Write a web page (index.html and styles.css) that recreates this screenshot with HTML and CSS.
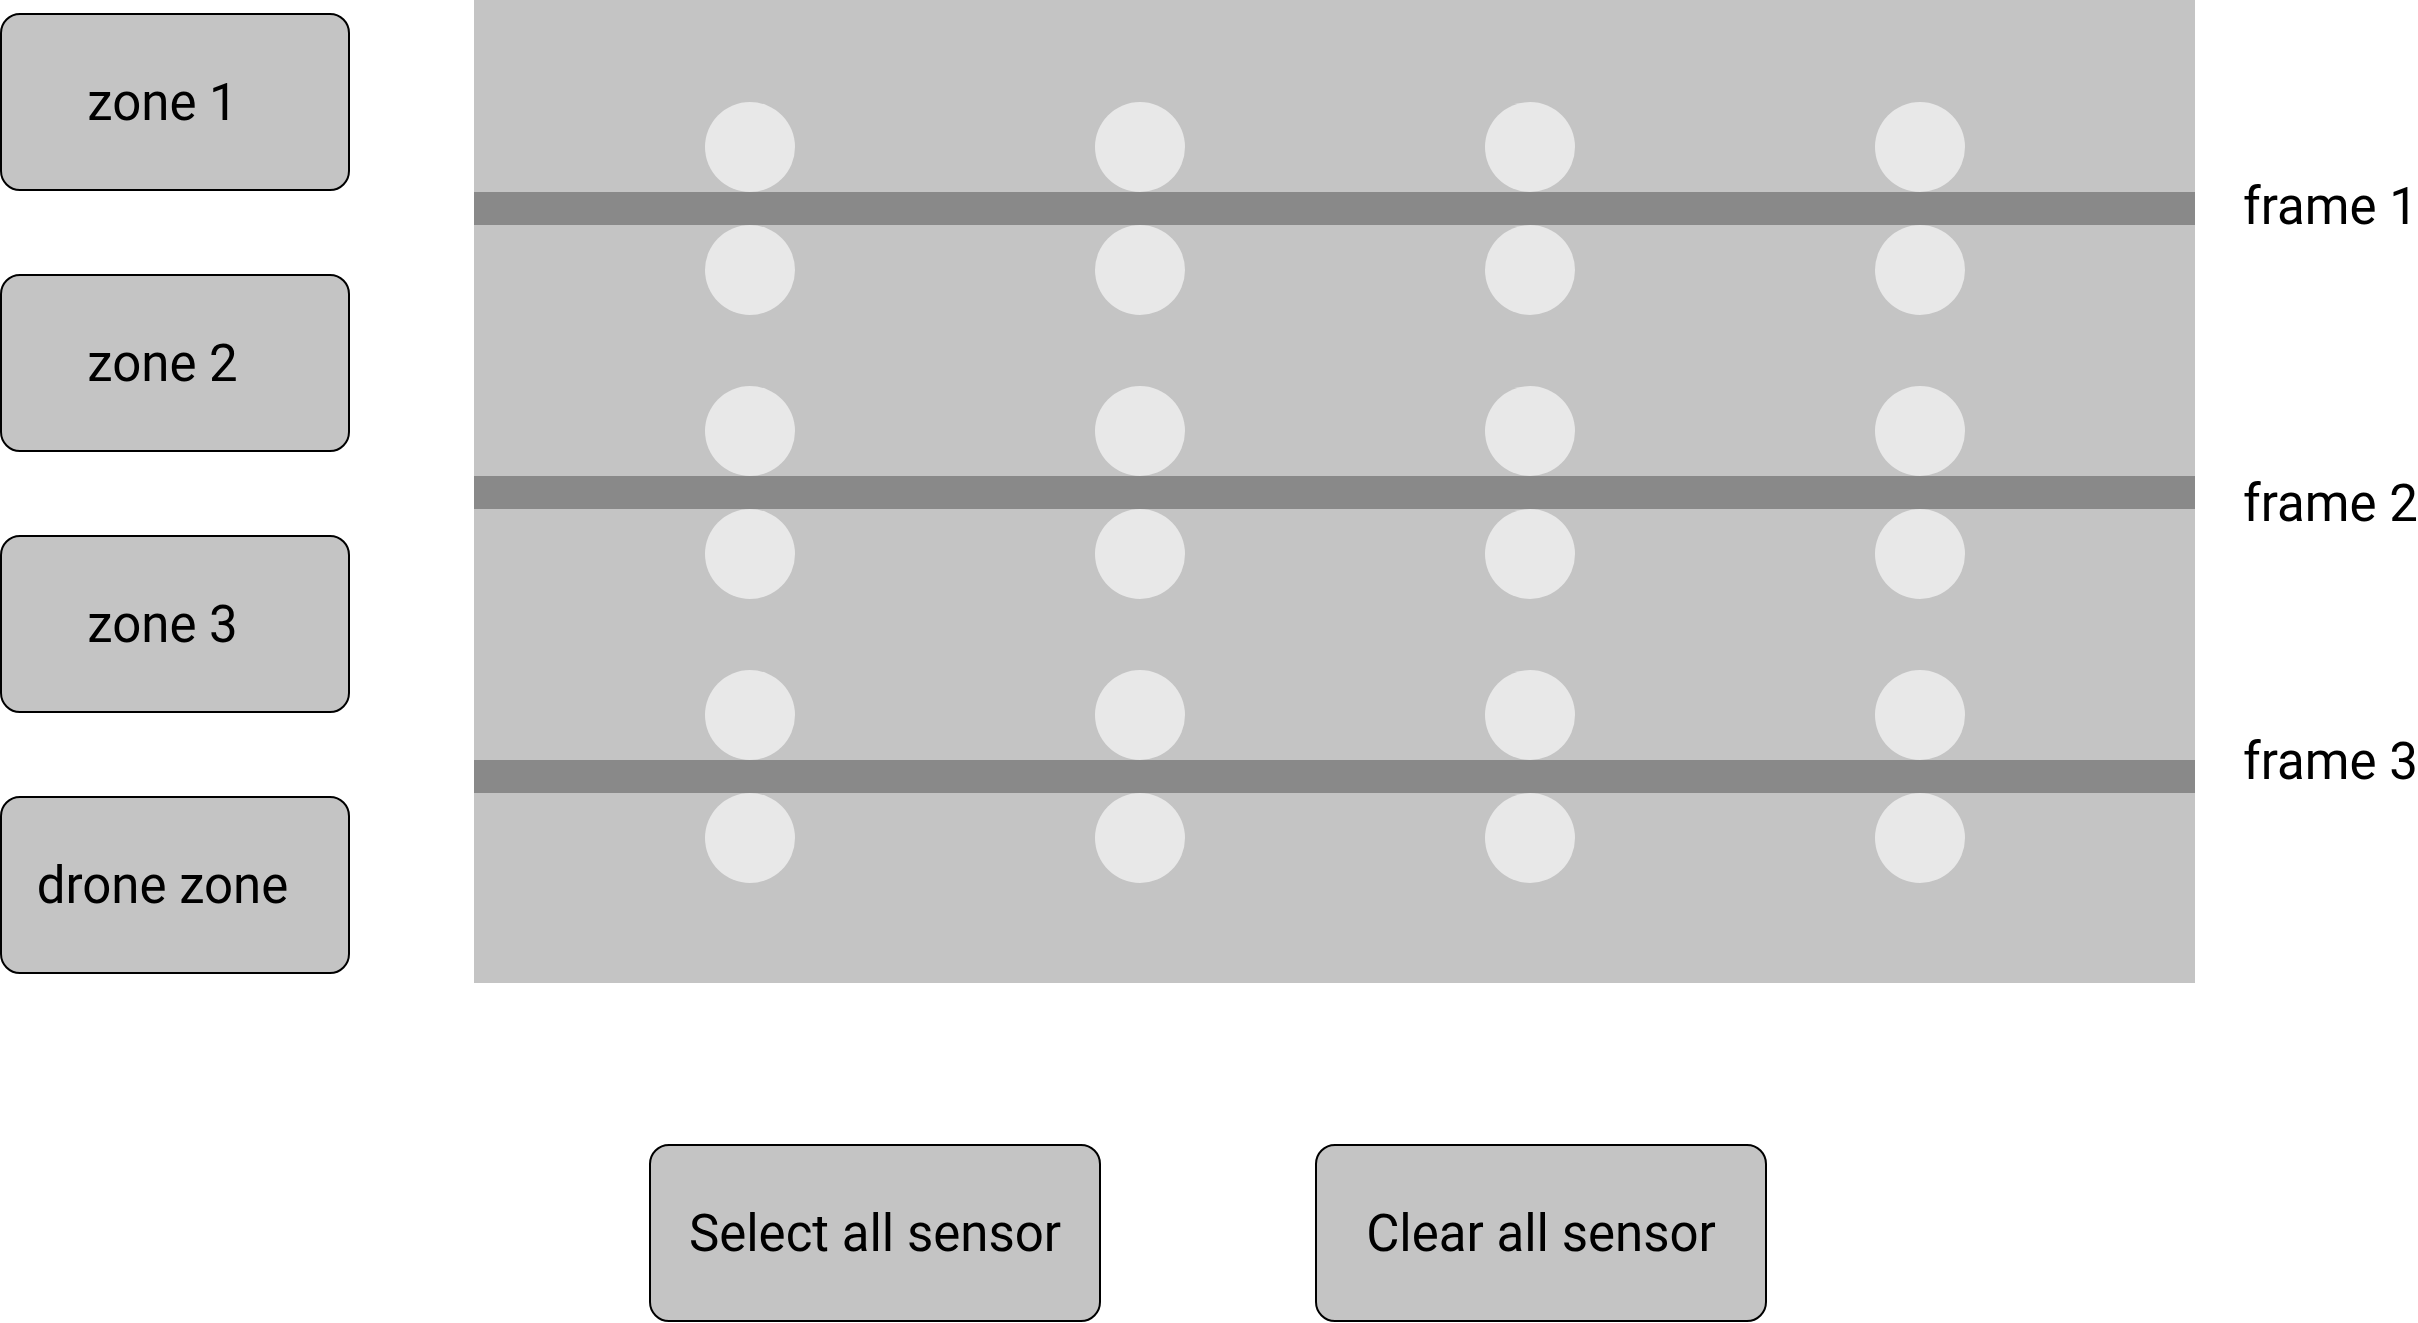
FILE: index.html
```html
<!DOCTYPE html>
<html>
<head>
<meta charset="utf-8">
<link rel="stylesheet" href="styles.css">
</head>
<body>
<div class="page">
  <div class="top">
    <div class="zones">
      <div class="btn zone">zone 1</div>
      <div class="btn zone">zone 2</div>
      <div class="btn zone">zone 3</div>
      <div class="btn zone">drone zone</div>
    </div>
    <div class="panel">
      <div class="group">
        <div class="dots"><span></span><span></span><span></span><span></span></div>
        <div class="bar"></div>
        <div class="dots"><span></span><span></span><span></span><span></span></div>
      </div>
      <div class="group">
        <div class="dots"><span></span><span></span><span></span><span></span></div>
        <div class="bar"></div>
        <div class="dots"><span></span><span></span><span></span><span></span></div>
      </div>
      <div class="group">
        <div class="dots"><span></span><span></span><span></span><span></span></div>
        <div class="bar"></div>
        <div class="dots"><span></span><span></span><span></span><span></span></div>
      </div>
    </div>
    <div class="labels">
      <div class="label l1">frame 1</div>
      <div class="label l2">frame 2</div>
      <div class="label l3">frame 3</div>
    </div>
  </div>
  <div class="actions">
    <div class="btn action">Select all sensor</div>
    <div class="btn action">Clear all sensor</div>
  </div>
</div>
</body>
</html>
```
FILE: styles.css
```css
* { box-sizing: border-box; }
html, body { margin: 0; padding: 0; background: #ffffff; }
body {
  font-family: Roboto, "Liberation Sans", sans-serif;
  color: #000000;
  width: 2418px;
  height: 1323px;
  overflow: hidden;
}
.page { display: flex; flex-direction: column; }
.top { display: flex; align-items: flex-start; }
.zones {
  display: flex;
  flex-direction: column;
  gap: 83px;
  padding-top: 13px;
  width: 350px;
}
.btn {
  background: #c4c4c4;
  border: 2px solid #000000;
  border-radius: 20px;
  height: 178px;
  display: flex;
  align-items: center;
  justify-content: center;
  font-size: 51px;
  line-height: 1;
  white-space: nowrap;
}
.zone { width: 350px; padding-right: 25px; }
.panel {
  margin-left: 124px;
  width: 1721px;
  height: 983px;
  background: #c4c4c4;
  padding-top: 102px;
  display: flex;
  flex-direction: column;
  gap: 71px;
}
.group { display: flex; flex-direction: column; }
.dots {
  display: flex;
  gap: 300px;
  padding-left: 231px;
  height: 90px;
}
.dots span {
  width: 90px;
  height: 90px;
  border-radius: 50%;
  background: #e8e8e8;
}
.bar { height: 33px; background: #898989; }
.labels { margin-left: 48px; display: flex; flex-direction: column; }
.label { font-size: 51px; line-height: 52px; white-space: nowrap; }
.l1 { margin-top: 181px; }
.l2 { margin-top: 245px; }
.l3 { margin-top: 206px; }
.actions {
  display: flex;
  gap: 214px;
  padding-left: 649px;
  margin-top: 161px;
}
.action { width: 452px; }
```
